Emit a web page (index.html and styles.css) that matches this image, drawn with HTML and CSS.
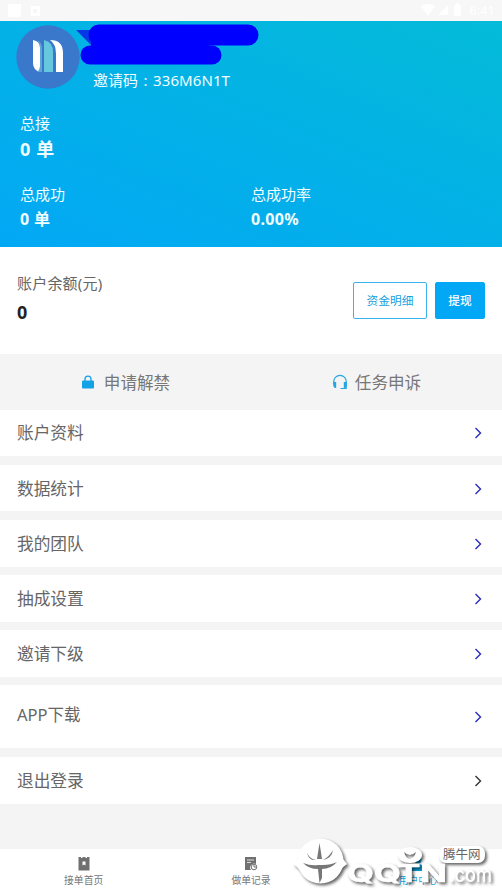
FILE: index.html
```html
<!DOCTYPE html>
<html lang="zh-CN">
<head>
<meta charset="utf-8">
<meta name="viewport" content="width=device-width, initial-scale=1">
<title>用户中心</title>
<link rel="stylesheet" href="styles.css">
</head>
<body>
<div class="app">
  <div class="status">
    <svg class="status-left" viewBox="0 0 40 21"><rect x="8" y="4" width="13" height="13"/><path d="M31 6h9v10h-9zM33 9v4h4v-4z" fill-rule="evenodd"/></svg>
    <svg class="status-right" viewBox="0 0 48 21"><path d="M0 6q7-4 14 0l-7 10zM17 15L27 5v10zM33 5h2V3h3v2h2v11h-7z"/></svg>
    <span>6:41</span>
  </div>

  <header class="hero">
    <div class="profile">
      <svg class="avatar" viewBox="0 0 64 64"><circle cx="32" cy="32" r="31.7" fill="#3a78cb"/><path d="M17 15q7 1 7 8v24q-7-2-7-9z" fill="#fff"/><path d="M21 15q5 2 5 9v23h-5q3-2 3-7V23q0-5-3-8z" fill="#5aa9d8"/><path d="M28 15q9 2 9 12v20h-9z" fill="#65c8df"/><path d="M34 15q13 0 13 13v19h-7V29q0-10-6-14z" fill="#fff"/></svg>
      <div class="invite">邀请码<i>:</i><span>336M6N1T</span></div>
      <svg class="scribble" viewBox="0 0 184 46"><path d="M0 9H20V29z" fill="#0738e6"/><g fill="none" stroke="#00f" stroke-linecap="round"><path d="M23 14H172" stroke-width="21"/><path d="M14 34H136" stroke-width="19"/></g><path d="M15 22H133V30H15z" fill="#00f"/></svg>
    </div>
    <div class="stat total"><p>总接</p><b>0 单</b></div>
    <div class="pair">
      <div class="stat"><p>总成功</p><b>0 单</b></div>
      <div class="stat"><p>总成功率</p><b>0.00%</b></div>
    </div>
  </header>

  <section class="balance">
    <div class="amount"><p>账户余额(元)</p><b>0</b></div>
    <button class="btn outline">资金明细</button>
    <button class="btn solid">提现</button>
  </section>

  <section class="actions">
    <div class="action"><svg class="lock" viewBox="0 0 14 14"><path d="M4 6V4.200a3 3 0 016 0V6" fill="none" stroke="#12a3e6" stroke-width="1.300"/><rect x="1" y="5.500" width="12" height="8" rx="1" fill="#12a3e6"/></svg><span>申请解禁</span></div>
    <div class="action"><svg class="headset" viewBox="0 0 16 16"><path d="M1.800 10V7.500a6.200 6.200 0 0112.400 0V14.500H8.500" fill="none" stroke="#24a6e0" stroke-width="1.200"/><path d="M1.200 8h3v6H3q-1.800-1-1.800-3zM11.800 8h3v3q0 2-1.800 3h-1.200z" fill="#24a6e0"/></svg><span>任务申诉</span></div>
  </section>

  <nav class="menu">
    <a class="row"><span>账户资料</span><svg class="arrow" viewBox="0 0 8 12"><path d="M1.500 1l5 5-5 5"/></svg></a>
    <a class="row"><span>数据统计</span><svg class="arrow" viewBox="0 0 8 12"><path d="M1.500 1l5 5-5 5"/></svg></a>
    <a class="row"><span>我的团队</span><svg class="arrow" viewBox="0 0 8 12"><path d="M1.500 1l5 5-5 5"/></svg></a>
    <a class="row"><span>抽成设置</span><svg class="arrow" viewBox="0 0 8 12"><path d="M1.500 1l5 5-5 5"/></svg></a>
    <a class="row"><span>邀请下级</span><svg class="arrow" viewBox="0 0 8 12"><path d="M1.500 1l5 5-5 5"/></svg></a>
    <a class="row tall"><span>APP下载</span><svg class="arrow" viewBox="0 0 8 12"><path d="M1.500 1l5 5-5 5"/></svg></a>
    <a class="row"><span>退出登录</span><svg class="arrow dark" viewBox="0 0 8 12"><path d="M1.500 1l5 5-5 5"/></svg></a>
  </nav>

  <footer class="tabs">
    <div class="tab"><svg viewBox="0 0 14 15"><path d="M1.500 1H4v1h1.500V1h3v1H10V1h2.500v13.500h-11z" fill="#707070"/><path d="M5.500 5.500h3v4L7 8.500l-1.500 1z" fill="#fff"/></svg><span>接单首页</span></div>
    <div class="tab"><svg viewBox="0 0 14 15"><path d="M1 1h11v7a4 4 0 00-5 6H1z" fill="#707070"/><path d="M3 4h7M3 6.500h4" stroke="#ddd"/><circle cx="10" cy="11" r="2.800" fill="#fff" stroke="#707070"/><path d="M10 9v2h2" fill="none" stroke="#707070"/></svg><span>做单记录</span></div>
    <div class="tab active"><svg viewBox="0 0 14 15"><circle cx="7" cy="4" r="3.500" fill="#0ea5e5"/><path d="M0 15q0-7 7-7t7 7z" fill="#0ea5e5"/></svg><span>用户中心</span></div>
  </footer>

  <svg class="watermark" viewBox="0 0 222 62">
    <g class="mark">
      <ellipse cx="40.500" cy="31" rx="23" ry="22.500"/>
      <path d="M13 34L18 29H63L67 34Q60 39 57 45H23Q20 39 13 34z"/>
      <text class="brand" x="67" y="52" textLength="54" lengthAdjust="spacingAndGlyphs">QQ</text>
      <text class="brand" x="117" y="52" textLength="50" lengthAdjust="spacingAndGlyphs">TN</text>
      <path fill-rule="evenodd" d="M118 25a12 8 0 0124 0a12 8 0 01-24 0zM124 22q6 6 12 0q-2 7-6 7t-6-7z"/>
      <rect x="159" y="16" width="46" height="17" rx="7"/>
      <text class="com" x="169" y="52" textLength="43" lengthAdjust="spacingAndGlyphs">.com</text>
    </g>
    <path class="twig" d="M39.500 13L42 29H37zM53 20Q52 28 43 30Q49 27 53 20zM27 23Q30 29 36 30Q29 31 27 23zM57 32Q51 39 42 39V48L39.500 53L38 39Q29 39 23 33Q31 36 38 35H43Q51 35 57 32z"/>
    <text class="site" x="163" y="29">腾牛网</text>
  </svg>
</div>
</body>
</html>
```
FILE: styles.css
```css
* { box-sizing: border-box; }
body, p { margin: 0; }
body { font-family: "Noto Sans", "Noto Sans CJK SC", sans-serif; background: #f4f4f4; }
.app { position: relative; width: 502px; height: 892px; overflow: hidden; display: flex; flex-direction: column; }
.status { height: 21px; flex: none; background: #f7f7f7; display: flex; align-items: center; color: #fff; fill: #fff; font-size: 13px; line-height: 21px; padding-right: 7px; }
.status-left { width: 40px; height: 21px; margin-right: auto; }
.status-right { width: 48px; height: 21px; }

.hero { height: 226px; flex: none; background: linear-gradient(22deg, #03a8f5 0%, #03b1e7 50%, #04bbd8 100%); color: #f2fdff; }
.profile { position: relative; height: 92px; display: flex; padding: 4px 0 0 16px; }
.avatar { width: 64px; height: 64px; }
.invite { display: flex; margin: 45px 0 0 13px; font-size: 15px; line-height: 20px; height: 20px; }
.invite i { font-style: normal; width: 15px; text-align: center; }
.invite span { letter-spacing: .1px; }
.scribble { position: absolute; left: 76px; top: 0; width: 184px; height: 46px; }
.stat p { font-size: 15px; line-height: 20px; }
.stat b { display: block; font-size: 16px; line-height: 22px; margin-top: 4px; letter-spacing: .3px; }
.total { padding-left: 20px; height: 71px; }
.total b { font-size: 18px; line-height: 26px; margin-top: 3px; letter-spacing: .6px; }
.pair { display: grid; grid-template-columns: 231px 1fr; padding-left: 20px; }

.balance { height: 107px; flex: none; background: #fff; display: flex; align-items: flex-start; padding: 35px 17px 0; }
.amount { flex: 1; }
.amount p { font-size: 15px; line-height: 22px; margin-top: -10px; color: #666; letter-spacing: .2px; }
.amount b { display: block; font-size: 18px; line-height: 24px; margin-top: 6px; color: #222; }
.btn { font: 11.7px/16px "Noto Sans CJK SC", sans-serif; height: 37px; border: 1px solid #39b4ee; border-radius: 2px; padding: 0 0 2px; }
.outline { width: 74px; background: #fff; color: #18a0e0; margin-right: 8px; }
.solid { width: 50px; background: #02a7f5; border-color: #02a7f5; color: #fff; font-weight: 500; }

.actions { height: 55.5px; flex: none; display: grid; grid-template-columns: 1fr 1fr; }
.action { display: flex; align-items: center; justify-content: center; font-size: 16.600px; line-height: 22px; color: #777; }
.action span { padding-top: 2px; }
.lock { width: 14px; height: 14px; margin-right: 9px; }
.headset { width: 16px; height: 16px; margin-right: 7px; }

.menu { display: flex; flex-direction: column; gap: 8.400px; }
.row { height: 46.800px; background: #fff; display: flex; align-items: center; justify-content: space-between; padding: 0 20px 0 17px; font-size: 16.700px; color: #666; }
.row span { margin-top: -1px; }
.tall { height: 63px; }
.tall span { margin-top: -6px; font-size: 16.500px; }
.arrow { width: 8px; height: 12px; fill: none; stroke: #2929bd; stroke-width: 1.400; margin-top: 1px; }
.tall .arrow { margin-top: 0; }
.dark { stroke: #333; }

.tabs { margin-top: auto; height: 43px; flex: none; background: #fff; display: grid; grid-template-columns: repeat(3, 1fr); }
.tab { display: flex; flex-direction: column; align-items: center; padding-top: 7px; font-size: 9.800px; line-height: 15px; color: #777; }
.tab svg { width: 14px; height: 15px; margin-bottom: 2px; }
.active { color: #0ea5e5; }

.watermark { position: absolute; left: 280px; top: 830px; width: 222px; height: 62px; }
.mark { fill: #fff; filter: drop-shadow(2px 2px 1.500px rgba(0, 0, 0, .6)); }
.brand { font: 700 24px Inter, sans-serif; stroke: #fff; stroke-width: .6px; }
.com { font: 500 21px Inter, sans-serif; }
.twig { fill: #777; }
.site { font: 12.500px "Noto Sans CJK SC", sans-serif; fill: #666; }
```
